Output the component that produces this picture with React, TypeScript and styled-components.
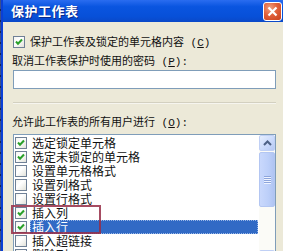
import React from "react";
import styled, { createGlobalStyle } from "styled-components";

const GlobalStyle = createGlobalStyle`
  html, body { margin: 0; padding: 0; background: #ece9d8; }
  body { font-family: "Noto Sans CJK SC", "Liberation Sans", sans-serif; }
`;

const items = [
  { text: "选定锁定单元格", checked: true },
  { text: "选定未锁定的单元格", checked: true },
  { text: "设置单元格格式", checked: false },
  { text: "设置列格式", checked: false },
  { text: "设置行格式", checked: false },
  { text: "插入列", checked: true },
  { text: "插入行", checked: true, selected: true },
  { text: "插入超链接", checked: false },
  { text: "删除列", checked: false },
];

const Check = ({ checked }: { checked: boolean }) => (
  <Box>
    {checked && (
      <svg width="10" height="10" viewBox="0 0 10 10">
        <polyline points="2,4.5 4,6.8 8,2.5" fill="none" stroke="#2aa02a" strokeWidth="2" />
      </svg>
    )}
  </Box>
);

const Arrow = ({ up }: { up?: boolean }) => (
  <svg width="9" height="6" viewBox="0 0 9 6">
    <polyline
      points={up ? "1,5 4.5,1.5 8,5" : "1,1 4.5,4.5 8,1"}
      fill="none"
      stroke="#4d6185"
      strokeWidth="2"
    />
  </svg>
);

const App = () => {
  return (
    <Window>
      <GlobalStyle />
      <Edge />
      <Dialog>
        <TitleBar>
          <Title>保护工作表</Title>
          <CloseButton>
            <svg width="11" height="11" viewBox="0 0 11 11">
              <path d="M1.5 1.5 L9.5 9.5 M9.5 1.5 L1.5 9.5" stroke="#fff" strokeWidth="2.2" />
            </svg>
          </CloseButton>
        </TitleBar>
        <Body>
          <CheckRow>
            <Check checked />
            <Label>
              保护工作表及锁定的单元格内容<Key> (<U>C</U>)</Key>
            </Label>
          </CheckRow>
          <FieldLabel>
            取消工作表保护时使用的密码<Key> (<U>P</U>):</Key>
          </FieldLabel>
          <PasswordInput />
          <Separator />
          <FieldLabel $gap={10}>
            允许此工作表的所有用户进行<Key> (<U>O</U>):</Key>
          </FieldLabel>
          <ListBox>
            <Items>
              {items.map((it) => (
                <Item key={it.text}>
                  <Check checked={it.checked} />
                  <ItemText $selected={!!it.selected}>{it.text}</ItemText>
                </Item>
              ))}
              <Annotation />
            </Items>
            <ScrollBar>
              <ScrollButton>
                <Arrow up />
              </ScrollButton>
              <Thumb>
                <Grip />
                <Grip />
                <Grip />
                <Grip />
              </Thumb>
              <Track />
              <ScrollButton>
                <Arrow />
              </ScrollButton>
            </ScrollBar>
          </ListBox>
        </Body>
      </Dialog>
    </Window>
  );
};

export default App;

const Window = styled.div`
  width: 283px;
  height: 251px;
  overflow: hidden;
  display: flex;
  background: #ece9d8;
`;

const Edge = styled.div`
  width: 3px;
  flex-shrink: 0;
  background:
    repeating-linear-gradient(to bottom, transparent 0 9px, #1a2450 9px 11px) left / 1px 100% no-repeat,
    linear-gradient(to right, #3b4f8a 0 1px, #0a3fd6 1px 3px);
`;

const Dialog = styled.div`
  flex: 1;
  display: flex;
  flex-direction: column;
  min-width: 0;
`;

const TitleBar = styled.div`
  height: 22px;
  flex-shrink: 0;
  display: flex;
  align-items: center;
  justify-content: space-between;
  padding: 0 1px 0 8px;
  background: linear-gradient(to bottom, #2a6cf0 0%, #0a55e0 30%, #0750d8 75%, #0a48c8 100%);
`;

const Title = styled.div`
  color: #fff;
  font-size: 13px;
  font-weight: bold;
  line-height: 22px;
  text-shadow: 1px 1px 0 #0a2a8a;
  letter-spacing: 0.5px;
`;

const CloseButton = styled.div`
  width: 19px;
  height: 19px;
  margin-top: 1px;
  box-sizing: border-box;
  border: 1px solid #fff;
  border-radius: 3px;
  background: radial-gradient(circle at 35% 30%, #f0a080 0%, #e0603a 45%, #c8401c 100%);
  display: flex;
  align-items: center;
  justify-content: center;
`;

const Body = styled.div`
  flex: 1;
  display: flex;
  flex-direction: column;
  padding: 13px 7px 0 10px;
  color: #111;
`;

const CheckRow = styled.div`
  display: flex;
  align-items: center;
  gap: 5px;
  height: 14px;
`;

const Box = styled.div`
  width: 12px;
  height: 12px;
  flex-shrink: 0;
  box-sizing: border-box;
  border: 1px solid #6f8096;
  background: linear-gradient(135deg, #f4f4f0 0%, #ffffff 40%, #e2e2da 100%);
  display: flex;
  align-items: center;
  justify-content: center;
`;

const Label = styled.span`
  font-size: 11px;
  line-height: 14px;
  white-space: nowrap;
`;

const Key = styled.span`
  font-family: "Liberation Mono", monospace;
  font-size: 11px;
`;

const U = styled.span`
  text-decoration: underline;
`;

const FieldLabel = styled.div<{ $gap?: number }>`
  font-size: 11px;
  line-height: 14px;
  white-space: nowrap;
  margin-top: ${(p) => p.$gap ?? 4}px;
  margin-left: -1px;
`;

const PasswordInput = styled.div`
  height: 19px;
  margin-top: 1px;
  box-sizing: border-box;
  border: 1px solid #7f9db9;
  background: #fff;
`;

const Separator = styled.div`
  margin-top: 13px;
  height: 0;
  border-top: 1px solid #d3d0c0;
  border-bottom: 1px solid #f6f5ef;
`;

const ListBox = styled.div`
  margin-top: 4px;
  height: 133px;
  box-sizing: border-box;
  border: 1px solid #7f9db9;
  background: #fff;
  display: flex;
`;

const Items = styled.div`
  flex: 1;
  position: relative;
  padding: 1px 1px 0 1px;
`;

const Item = styled.div`
  height: 14px;
  display: flex;
  align-items: center;
  gap: 3px;
`;

const ItemText = styled.div<{ $selected: boolean }>`
  flex: 1;
  height: 14px;
  padding-left: 2px;
  font-size: 12px;
  line-height: 14px;
  white-space: nowrap;
  color: ${(p) => (p.$selected ? "#fff" : "#111")};
  background: ${(p) => (p.$selected ? "#316ac5" : "transparent")};
  outline: ${(p) => (p.$selected ? "1px dotted #9ab8e8" : "none")};
  outline-offset: -1px;
`;

const Annotation = styled.div`
  position: absolute;
  left: -3px;
  top: 70px;
  width: 90px;
  height: 29px;
  box-sizing: border-box;
  border: 2px solid rgba(150, 45, 70, 0.85);
  pointer-events: none;
`;

const ScrollBar = styled.div`
  width: 16px;
  flex-shrink: 0;
  display: flex;
  flex-direction: column;
  background: #fbfbf7;
`;

const ScrollButton = styled.div`
  width: 16px;
  height: 16px;
  flex-shrink: 0;
  box-sizing: border-box;
  border: 1px solid #c0d0f5;
  border-radius: 2px;
  background: linear-gradient(135deg, #e6eefe 0%, #c8d8fb 60%, #b6c8f3 100%);
  display: flex;
  align-items: center;
  justify-content: center;
`;

const Thumb = styled.div`
  height: 55px;
  margin-top: 1px;
  box-sizing: border-box;
  border: 1px solid #b3c6f2;
  border-radius: 2px;
  background: linear-gradient(to right, #c9d8fc 0%, #bccff9 60%, #b0c4f2 100%);
  display: flex;
  flex-direction: column;
  align-items: center;
  justify-content: center;
  gap: 1px;
`;

const Grip = styled.div`
  width: 7px;
  height: 1px;
  background: #8da5dc;
  box-shadow: 0 1px 0 #eef3ff;
`;

const Track = styled.div`
  flex: 1;
`;
